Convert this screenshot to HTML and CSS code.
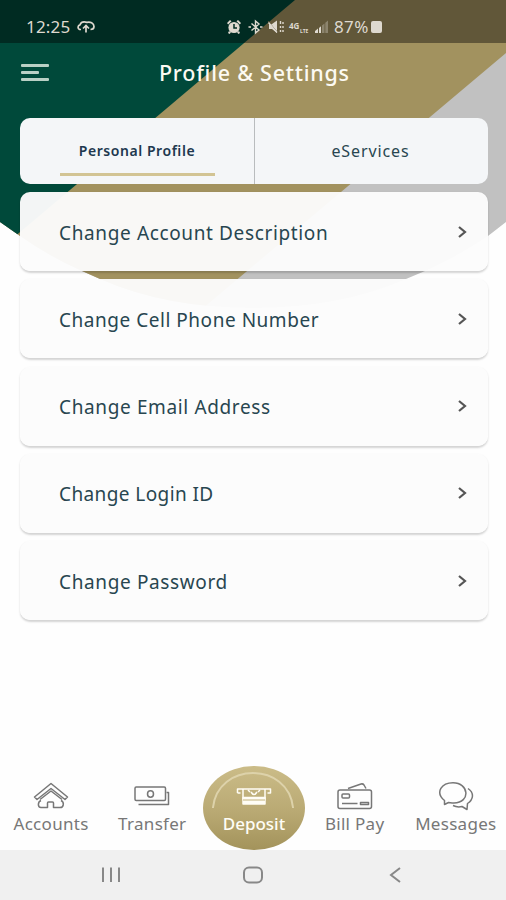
FILE: index.html
```html
<!DOCTYPE html>
<html lang="en">
<head>
<meta charset="utf-8">
<title>Profile &amp; Settings</title>
<link rel="stylesheet" href="styles.css">
</head>
<body>
<div class="screen">
  <svg class="backdrop" viewBox="0 0 506 320" aria-hidden="true">
    <defs><clipPath id="bowl"><path d="M0 0H506V222Q497 229 488 236Q457 257 425 271L406 279Q340 308 253 308Q166 308 100 279L82 271Q50 257 20 236L0 222Z"/></clipPath></defs>
    <g clip-path="url(#bowl)">
      <rect width="506" height="320" fill="#c1c1c1"/>
      <path d="M0 0H569L189 320H0Z" fill="#a2925f"/>
      <path d="M0 0H295L0 249Z" fill="#00493a"/>
    </g>
  </svg>

  <div class="status">
    <span class="clock">12:25</span>
    <svg class="cloud" viewBox="0 0 20 14"><path d="M5 9.500H3.500A2.500 2.500 0 0 1 4 4.800C5 2 8 1.500 11 2.400C14 1.200 18 3.400 18 6.500C18 8.500 16.500 9.500 14.500 9.500M10 12.500V6M7 8.500L10 5.500L13 8.500" fill="none" stroke="currentColor" stroke-width="1.700"/></svg>
    <svg class="icons" viewBox="0 0 104 16">
      <g class="i-fill">
        <circle cx="8" cy="8.500" r="5.600"/><path d="M1 4L4 1L5.500 2.300L2.200 5.500ZM15 4L12 1L10.500 2.300L13.800 5.500ZM3 12L5 13.500L3.500 15L2 14ZM13 12L11 13.500L12.500 15L14 14Z"/>
        <path d="M43 5H46L51 1.500V14L46 10H43Z"/>
        <path d="M89 14V12L92 9.500V14Z M93 14V9L95 7.300V14Z"/><path d="M96 14V6.500L98.500 4.500V14ZM99.300 14V3.700L102 1.500V14Z" opacity=".35"/>
      </g>
      <path d="M8 5V9H11" stroke="#002b21" fill="none" stroke-width="1.500"/>
      <path d="M42 2L52 14" stroke="#5a5038" fill="none" stroke-width="1"/>
      <path class="i-line" d="M42.500 3.500L51 13.500M25.500 4.500L33 11L29.500 14V2L33 5L25.500 11.500M22.500 8H25M34 8H36.500M54.500 2V5M54.500 7V9M54.500 11V13M57 3V5M57 7V9M57 11V13"/>
      <text x="63" y="10">4G</text><text class="lte" x="74" y="14">LTE</text>
    </svg>
    <span class="percent">87%</span>
    <span class="battery"></span>
  </div>

  <header class="title-bar">
    <button class="menu" aria-label="Menu"><i></i><i></i><i></i></button>
    <h1>Profile &amp; Settings</h1>
  </header>

  <nav class="tabs">
    <a class="tab active"><span>Personal Profile</span></a>
    <a class="tab"><span>eServices</span></a>
  </nav>

  <main class="list">
    <a class="card"><span class="t1">Change Account Description</span><svg viewBox="0 0 10 14"><path d="M1 2L7 7L1 12"/></svg></a>
    <a class="card"><span class="t2">Change Cell Phone Number</span><svg viewBox="0 0 10 14"><path d="M1 2L7 7L1 12"/></svg></a>
    <a class="card"><span class="t3">Change Email Address</span><svg viewBox="0 0 10 14"><path d="M1 2L7 7L1 12"/></svg></a>
    <a class="card"><span class="t4">Change Login ID</span><svg viewBox="0 0 10 14"><path d="M1 2L7 7L1 12"/></svg></a>
    <a class="card"><span class="t5">Change Password</span><svg viewBox="0 0 10 14"><path d="M1 2L7 7L1 12"/></svg></a>
  </main>

  <nav class="bottom">
    <a class="item">
      <svg viewBox="0 0 36 30"><path d="M1.500 15L18 1.500L34.500 15L32 17.500L18 6.500L4 17.500ZM7 17.500L18 9L29 17.500M8 18.500C4.500 20 4.500 25.500 8 25.500H14.500V21Q14.500 20 15.500 20H19.500Q20.500 20 20.500 21V25.500H27C31 25.500 31.500 20 28 18.500"/></svg>
      <span>Accounts</span>
    </a>
    <a class="item">
      <svg viewBox="0 0 36 30"><rect x="1" y="5" width="30.500" height="13.500" rx="1.200"/><ellipse cx="16.500" cy="12" rx="3" ry="3.200"/><path d="M4.500 22.500H34.500V10.500H32.500"/></svg>
      <span>Transfer</span>
    </a>
    <a class="item deposit">
      <svg class="arc" viewBox="0 0 102 84"><path d="M10 42C15 -5 86 -5 91 42"/></svg>
      <svg viewBox="0 0 36 30"><path d="M1.500 11V7H34.500V11H31.500M1.500 11H4.500M7 7V17H29V7"/><path d="M12 8L14 10M15 10Q18 15 21 10M24 8L22 10"/><path class="solid" d="M7 15.500H29V22H7Z"/><path class="cut" d="M7 18H29"/></svg>
      <span>Deposit</span>
    </a>
    <a class="item">
      <svg viewBox="0 0 36 30"><rect x="1" y="8" width="33.500" height="18.500" rx="2"/><path d="M11 6.500L24 2Q26 1.500 27 3L29 6.500M5 21.500H20.500"/><rect x="5" y="12" width="7.500" height="4" rx="1"/><path d="M23.500 20.500H31.500V22.500H23.500Z"/></svg>
      <span>Bill Pay</span>
    </a>
    <a class="item">
      <svg viewBox="0 0 36 30"><path d="M6.500 22.500V18.500C-3.500 10 4 .8 15 .8C31 .8 33 20.500 16 21C13 21 12 20.500 10.500 20.500ZM30 6.500C36.500 11 35.500 17.500 29.500 21.500L29 27.500L24 24.500C20 25.500 17 24.500 15 23.500"/></svg>
      <span>Messages</span>
    </a>
  </nav>

  <footer class="system">
    <svg viewBox="0 0 20 18"><path d="M2 1.500V16M10 1.500V16M18 1.500V16"/></svg>
    <svg viewBox="0 0 20 18"><rect x="1" y="1.500" width="18" height="15" rx="5"/></svg>
    <svg viewBox="0 0 20 18"><path d="M15 2L6 9L15 16"/></svg>
  </footer>
</div>
</body>
</html>
```
FILE: styles.css
```css
* { box-sizing: border-box; }
body { margin: 0; background: #fefefe; font-family: "Noto Sans", "Open Sans", sans-serif; }
.screen { position: relative; width: 506px; height: 900px; display: flex; flex-direction: column; overflow: hidden; background: #fefefe; }
.backdrop { position: absolute; inset: 0 auto auto 0; width: 506px; height: 320px; }
.status, .title-bar, .tabs, .list, .bottom, .system { position: relative; flex: none; }

.status { height: 43px; padding: 11px 0 0 26px; display: flex; align-items: center; background: rgba(0, 0, 0, .4); color: #ded9cf; }
.clock { width: 49px; font-size: 17px; letter-spacing: .2px; line-height: 30px; }
.cloud { width: 20px; height: 14px; margin-left: 1px; }
.icons { width: 104px; height: 16px; margin-left: 130px; }
.i-fill { fill: currentColor; }
.i-line { fill: none; stroke: currentColor; stroke-width: 1.400; }
.icons text { font-size: 8px; font-weight: 700; fill: currentColor; }
.icons .lte { font-size: 5px; }
.percent { width: 37px; margin-left: 4px; font-size: 17px; letter-spacing: .4px; line-height: 30px; }
.battery { width: 11px; height: 12px; border-radius: 2px; background: currentColor; }

.title-bar { height: 75px; display: flex; align-items: flex-start; padding: 15px 0 0 21px; }
.menu { width: 28px; height: 30px; padding: 6px 0 0; border: 0; background: none; display: flex; flex-direction: column; gap: 4px; }
.menu i { width: 28px; height: 3px; border-radius: 1px; background: #b9d0c5; }
.menu i:nth-child(2) { width: 18px; }
h1 { margin: 0 0 0 110px; font-size: 21.500px; font-weight: 500; line-height: 30px; letter-spacing: .75px; color: #fcfaf3; white-space: nowrap; }

.tabs { height: 66px; margin: 0 18px 0 20px; display: grid; grid-template-columns: 1fr 1fr; border-radius: 10px; background: #f4f6f8; overflow: hidden; }
.tab { display: flex; justify-content: center; padding-top: 21px; font-size: 16px; line-height: 24px; letter-spacing: .9px; color: #284650; }
.tab + .tab { border-left: 1px solid #b9bcbe; padding-right: 2px; }
.tab.active { font-size: 14px; font-weight: 600; letter-spacing: .55px; color: #20384f; }
.active span { width: 155px; height: 37px; text-align: center; border-bottom: 3px solid #d2c494; }

.list { margin: 8px 18px 0 20px; display: grid; grid-auto-rows: 79px; gap: 8.300px; }
.card { display: flex; align-items: center; justify-content: space-between; padding: 0 20px 0 39px; border-radius: 10px; background: rgba(252, 252, 252, .965); box-shadow: 0 1.500px 2px rgba(0, 0, 0, .17); color: #284650; font-size: 19px; letter-spacing: .63px; }
.card span { padding-top: 2px; }
.t2 { letter-spacing: .53px; }
.t4 { letter-spacing: .4px; }
.card svg { width: 10px; height: 14px; fill: none; stroke: #555; stroke-width: 2.200; }

.bottom { height: 91px; margin-top: auto; display: grid; grid-template-columns: repeat(5, 101.200px); }
.item { position: relative; display: flex; flex-direction: column; align-items: center; padding: 23px 0 0 1px; color: #777; font-size: 17px; letter-spacing: .3px; }
.item svg { width: 36px; height: 30px; fill: none; stroke: currentColor; stroke-width: 1.500; stroke-linejoin: round; }
.item span { line-height: 24px; white-space: nowrap; }
.deposit { height: 84px; margin: 7px -1px 0 1px; padding: 16px 0 0; border-radius: 50%; background: linear-gradient(#cbbc88, #b9a973 55%, #a3935b); color: #fffdf5; font-weight: 500; letter-spacing: 0; }
.deposit .arc { position: absolute; inset: 0 auto auto 0; width: 101px; height: 84px; stroke: #ddd2aa; stroke-width: 2; }
.deposit .solid { fill: currentColor; }
.deposit .cut { stroke: #c2b27c; stroke-width: 1; }

.system { height: 50px; padding: 0 101px; display: flex; align-items: center; justify-content: space-between; background: #f0f0f0; }
.system svg { width: 20px; height: 18px; fill: none; stroke: #888; stroke-width: 2; }
```
